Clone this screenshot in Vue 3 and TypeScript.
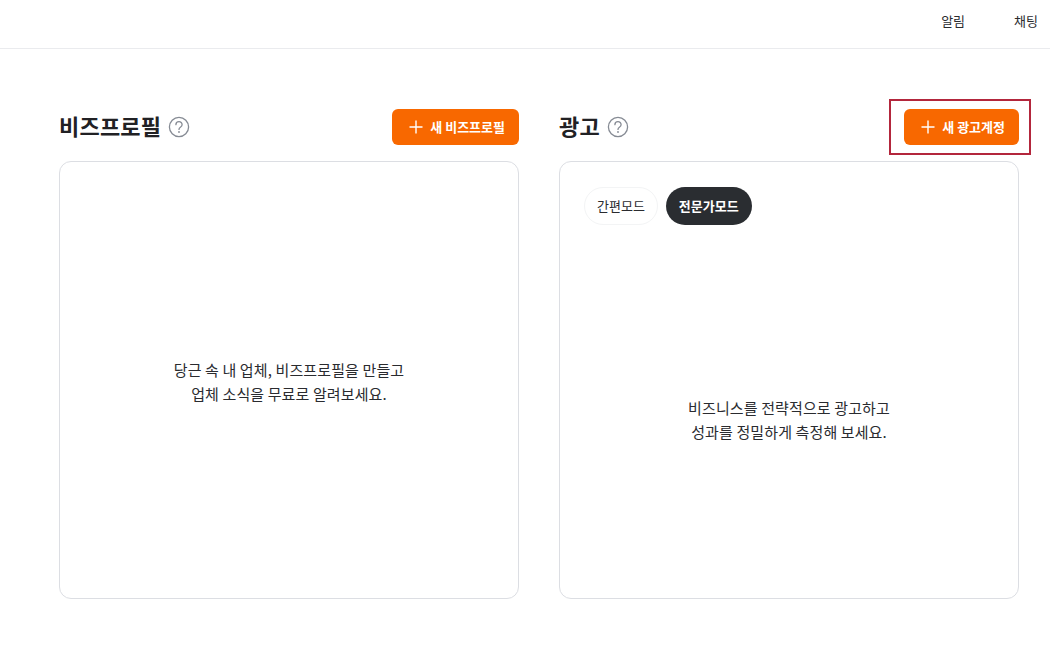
<script setup lang="ts">
const panels = [
  {
    title: '비즈프로필',
    action: '새 비즈프로필',
    lines: ['당근 속 내 업체, 비즈프로필을 만들고', '업체 소식을 무료로 알려보세요.'],
    tabs: [] as string[],
    marked: false,
  },
  {
    title: '광고',
    action: '새 광고계정',
    lines: ['비즈니스를 전략적으로 광고하고', '성과를 정밀하게 측정해 보세요.'],
    tabs: ['간편모드', '전문가모드'],
    marked: true,
  },
]
</script>

<template>
  <div class="page">
    <header class="topbar">
      <a class="top-link">알림</a>
      <a class="top-link">채팅</a>
    </header>

    <main class="columns">
      <section v-for="panel in panels" :key="panel.title" class="panel">
        <div class="panel-head">
          <h2 class="panel-title">{{ panel.title }}</h2>
          <svg class="help" width="22" height="22" viewBox="0 0 22 22" fill="none">
            <circle cx="11" cy="11" r="9.6" stroke="#868b94" stroke-width="1.3" />
            <path
              d="M7.9 8.7a3.1 3.1 0 0 1 6.2 0c0 1.3-.8 1.9-1.7 2.5-.9.6-1.4 1.1-1.4 2.2"
              stroke="#868b94"
              stroke-width="1.3"
              stroke-linecap="round"
            />
            <circle cx="11" cy="16" r=".9" fill="#868b94" />
          </svg>
          <button class="add-btn" type="button">
            <svg width="16" height="16" viewBox="0 0 16 16" fill="none">
              <path d="M8 1.5v13M1.5 8h13" stroke="#fff" stroke-width="1.4" />
            </svg>
            <span class="add-label">{{ panel.action }}</span>
            <i v-if="panel.marked" class="mark"></i>
          </button>
        </div>

        <div class="card">
          <div v-if="panel.tabs.length" class="tabs">
            <span
              v-for="(tab, i) in panel.tabs"
              :key="tab"
              class="tab"
              :class="{ active: i === 1 }"
            >{{ tab }}</span>
          </div>
          <div class="card-body">
            <p v-for="line in panel.lines" :key="line">{{ line }}</p>
          </div>
        </div>
      </section>
    </main>
  </div>
</template>

<style>
html,
body {
  margin: 0;
  background: #fff;
}
</style>

<style scoped>
.page {
  width: 1050px;
  height: 646px;
  overflow: hidden;
  font-family: "Noto Sans CJK KR", "Noto Sans", sans-serif;
  color: #212124;
}

.topbar {
  display: flex;
  justify-content: flex-end;
  align-items: center;
  gap: 49px;
  box-sizing: border-box;
  height: 49px;
  padding: 0 12px 8px 0;
  border-bottom: 1px solid #eaebee;
}

.top-link {
  font-size: 13px;
  white-space: nowrap;
  color: #2a2b2f;
}

.columns {
  display: flex;
  gap: 40px;
  padding: 60px 0 0 59px;
}

.panel {
  width: 460px;
}

.panel-head {
  display: flex;
  align-items: center;
  height: 36px;
  margin-bottom: 16px;
}

.panel-title {
  margin: 0 7px 4px 0;
  font-size: 22px;
  font-weight: 700;
  line-height: 32px;
  letter-spacing: 0.2px;
}

.help {
  margin-bottom: 1px;
}

.add-btn {
  position: relative;
  display: flex;
  align-items: center;
  gap: 6px;
  height: 36px;
  margin-left: auto;
  padding: 0 14px 0 16px;
  border: 0;
  border-radius: 6px;
  background: #f86800;
  color: #fff;
  font-family: inherit;
  font-size: 13px;
  font-weight: 700;
}

.add-label {
  margin-bottom: 2px;
}

.mark {
  position: absolute;
  top: -10px;
  right: -12px;
  bottom: -10px;
  left: -15px;
  border: 2px solid #b3263c;
  pointer-events: none;
}

.card {
  display: flex;
  flex-direction: column;
  box-sizing: border-box;
  height: 438px;
  border: 1px solid #dcdee3;
  border-radius: 12px;
}

.tabs {
  display: flex;
  gap: 8px;
  padding: 25px 24px 12px;
}

.tab {
  display: flex;
  align-items: center;
  box-sizing: border-box;
  height: 38px;
  padding: 0 12px 2px;
  border: 1px solid #f3f4f5;
  border-radius: 19px;
  font-size: 13px;
  color: #2a2b2f;
}

.tab.active {
  padding: 0 13px 2px;
  border: 0;
  background: #2a2d31;
  color: #fff;
  font-weight: 700;
}

.card-body {
  flex: 1;
  display: flex;
  flex-direction: column;
  justify-content: center;
  align-items: center;
  padding-top: 4px;
  font-size: 15px;
  line-height: 24px;
  letter-spacing: 0.12px;
  color: #2a2b2f;
}

.card-body p {
  margin: 0;
}
</style>
